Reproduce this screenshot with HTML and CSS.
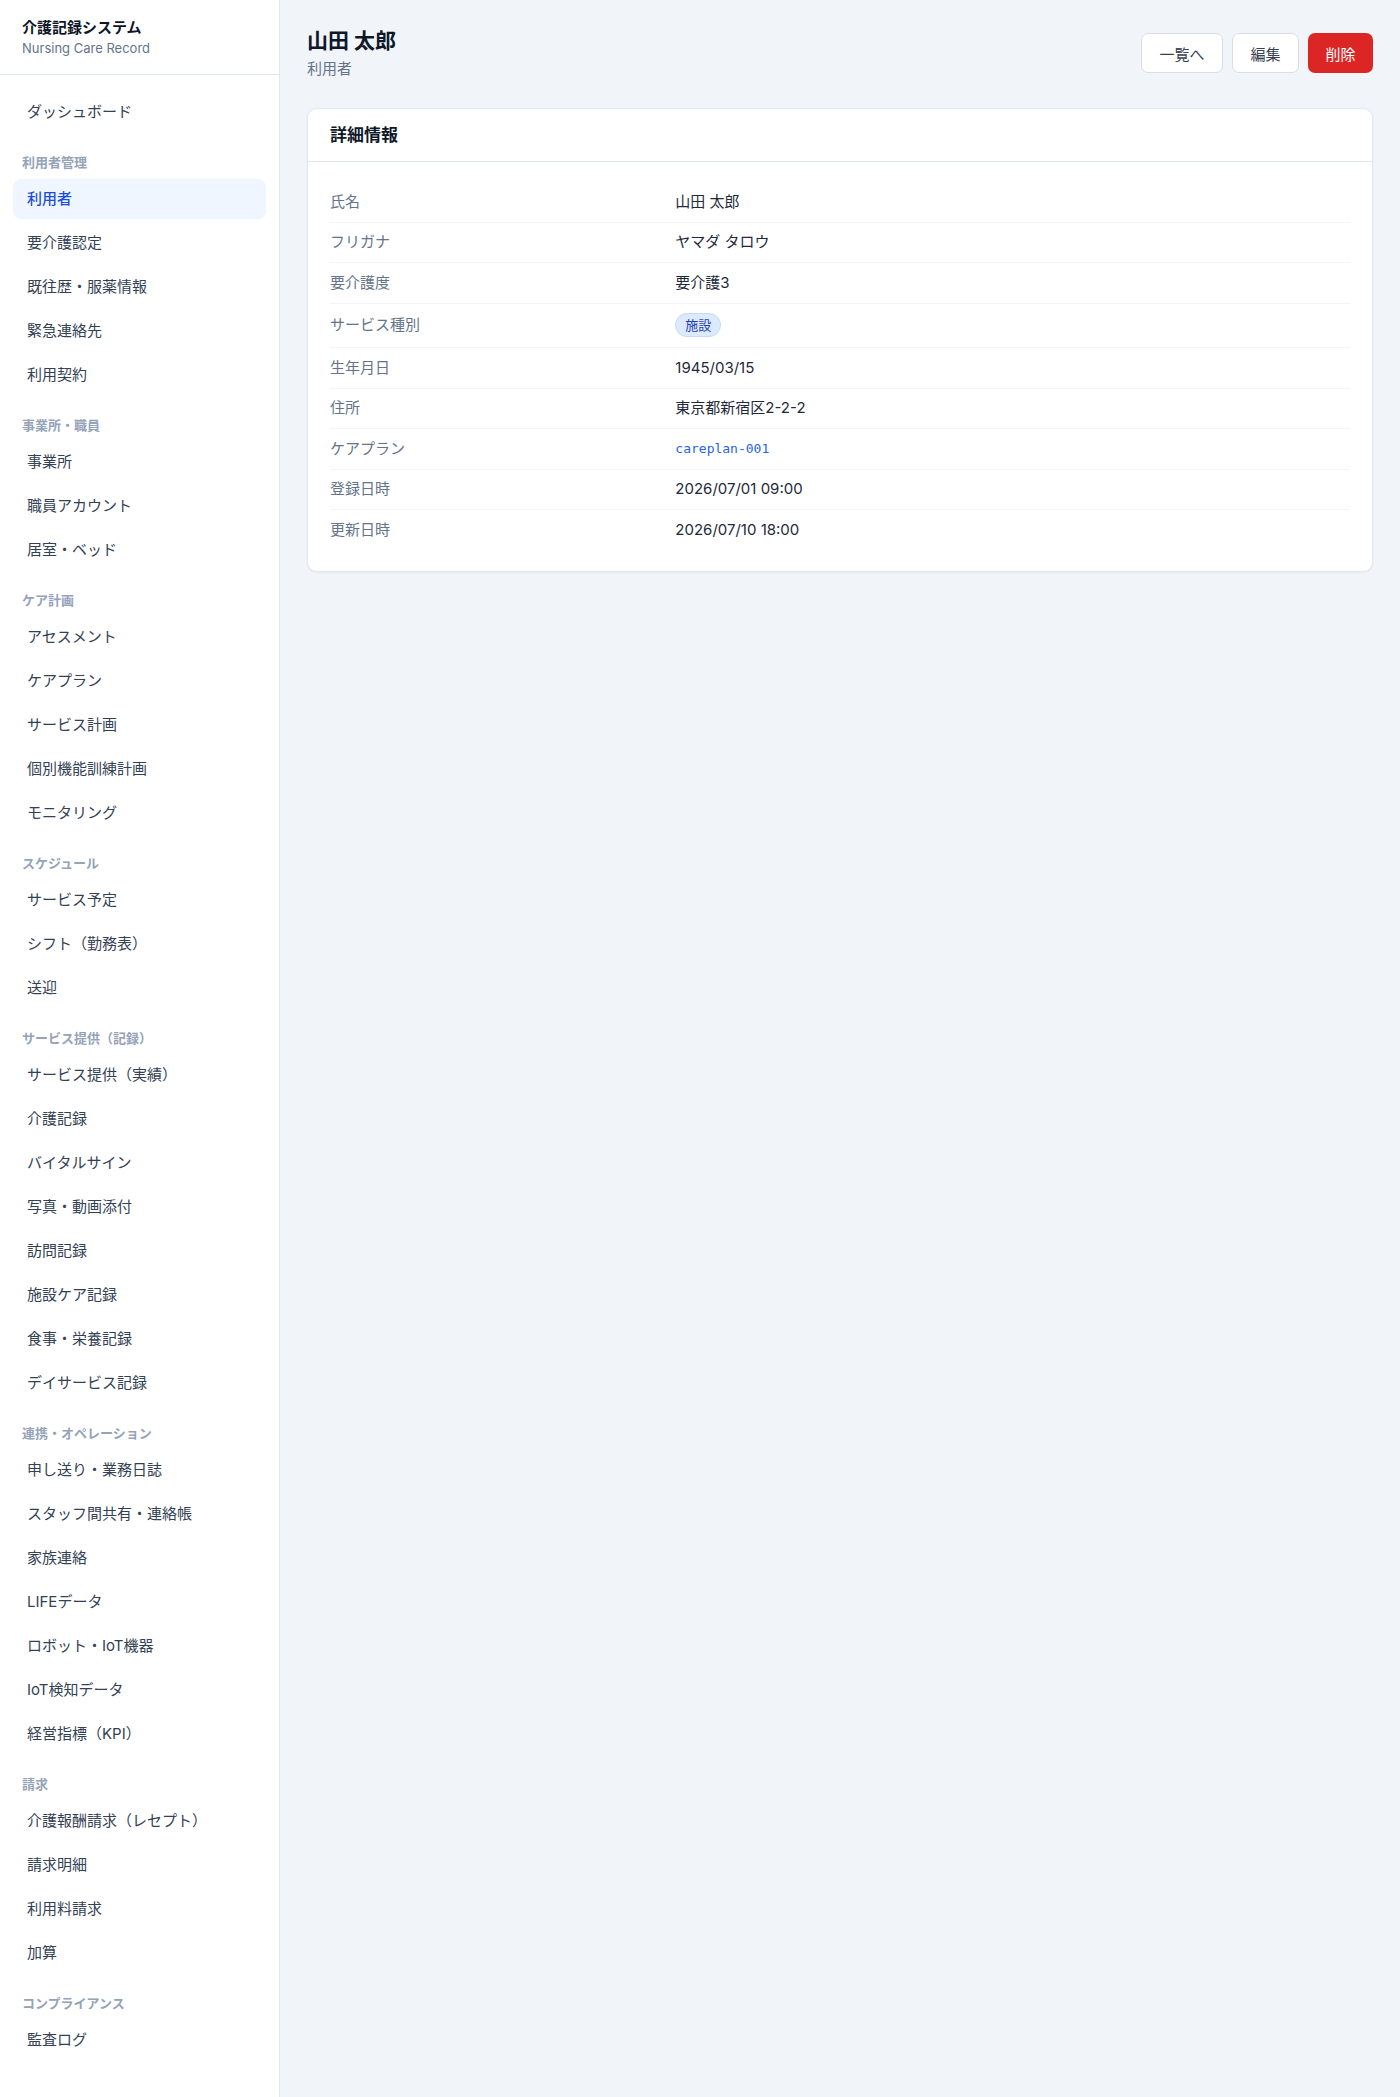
FILE: index.html
```html
<!DOCTYPE html>
<html lang="ja">
<head>
<meta charset="utf-8">
<title>山田 太郎 - 介護記録システム</title>
<link rel="stylesheet" href="styles.css">
</head>
<body>
<div class="layout">
  <aside class="sidebar">
    <div class="brand">
      <div class="brand-title">介護記録システム</div>
      <div class="brand-sub">Nursing Care Record</div>
    </div>
    <nav class="nav">
      <a class="nav-item">ダッシュボード</a>
      <div class="nav-label">利用者管理</div>
      <a class="nav-item active">利用者</a>
      <a class="nav-item">要介護認定</a>
      <a class="nav-item">既往歴・服薬情報</a>
      <a class="nav-item">緊急連絡先</a>
      <a class="nav-item">利用契約</a>
      <div class="nav-label">事業所・職員</div>
      <a class="nav-item">事業所</a>
      <a class="nav-item">職員アカウント</a>
      <a class="nav-item">居室・ベッド</a>
      <div class="nav-label">ケア計画</div>
      <a class="nav-item">アセスメント</a>
      <a class="nav-item">ケアプラン</a>
      <a class="nav-item">サービス計画</a>
      <a class="nav-item">個別機能訓練計画</a>
      <a class="nav-item">モニタリング</a>
      <div class="nav-label">スケジュール</div>
      <a class="nav-item">サービス予定</a>
      <a class="nav-item">シフト（勤務表）</a>
      <a class="nav-item">送迎</a>
      <div class="nav-label">サービス提供（記録）</div>
      <a class="nav-item">サービス提供（実績）</a>
      <a class="nav-item">介護記録</a>
      <a class="nav-item">バイタルサイン</a>
      <a class="nav-item">写真・動画添付</a>
      <a class="nav-item">訪問記録</a>
      <a class="nav-item">施設ケア記録</a>
      <a class="nav-item">食事・栄養記録</a>
      <a class="nav-item">デイサービス記録</a>
      <div class="nav-label">連携・オペレーション</div>
      <a class="nav-item">申し送り・業務日誌</a>
      <a class="nav-item">スタッフ間共有・連絡帳</a>
      <a class="nav-item">家族連絡</a>
      <a class="nav-item">LIFEデータ</a>
      <a class="nav-item">ロボット・IoT機器</a>
      <a class="nav-item">IoT検知データ</a>
      <a class="nav-item">経営指標（KPI）</a>
      <div class="nav-label">請求</div>
      <a class="nav-item">介護報酬請求（レセプト）</a>
      <a class="nav-item">請求明細</a>
      <a class="nav-item">利用料請求</a>
      <a class="nav-item">加算</a>
      <div class="nav-label">コンプライアンス</div>
      <a class="nav-item">監査ログ</a>
    </nav>
  </aside>
  <main class="main">
    <header class="page-head">
      <div class="page-titles">
        <h1 class="page-title">山田 太郎</h1>
        <div class="page-sub">利用者</div>
      </div>
      <div class="actions">
        <button class="btn btn-outline">一覧へ</button>
        <button class="btn btn-outline">編集</button>
        <button class="btn btn-danger">削除</button>
      </div>
    </header>
    <section class="card">
      <div class="card-head">詳細情報</div>
      <div class="card-body">
        <div class="row"><div class="dt">氏名</div><div class="dd">山田 太郎</div></div>
        <div class="row"><div class="dt">フリガナ</div><div class="dd">ヤマダ タロウ</div></div>
        <div class="row"><div class="dt">要介護度</div><div class="dd">要介護3</div></div>
        <div class="row"><div class="dt">サービス種別</div><div class="dd"><span class="badge">施設</span></div></div>
        <div class="row"><div class="dt">生年月日</div><div class="dd">1945/03/15</div></div>
        <div class="row"><div class="dt">住所</div><div class="dd">東京都新宿区2-2-2</div></div>
        <div class="row"><div class="dt">ケアプラン</div><div class="dd"><a class="code-link">careplan-001</a></div></div>
        <div class="row"><div class="dt">登録日時</div><div class="dd">2026/07/01 09:00</div></div>
        <div class="row last"><div class="dt">更新日時</div><div class="dd">2026/07/10 18:00</div></div>
      </div>
    </section>
  </main>
</div>
</body>
</html>
```
FILE: styles.css
```css
* { box-sizing: border-box; }
html, body { margin: 0; padding: 0; }
body {
  font-family: Inter, "Noto Sans CJK JP", sans-serif;
  color: #1e293b;
  background: #f1f5f9;
}
.layout {
  display: flex;
  min-height: 100vh;
}
.sidebar {
  width: 280px;
  flex-shrink: 0;
  background: #ffffff;
  border-right: 1px solid #e2e8f0;
}
.brand {
  padding: 17px 22px;
  border-bottom: 1px solid #e2e8f0;
}
.brand-title {
  font-size: 15px;
  line-height: 22px;
  font-weight: 700;
  color: #0f172a;
}
.brand-sub {
  font-size: 13px;
  line-height: 18px;
  color: #64748b;
}
.nav {
  display: flex;
  flex-direction: column;
  padding: 17px 13px 16px;
}
.nav-item {
  display: block;
  height: 40px;
  line-height: 40px;
  padding: 0 14px;
  margin-bottom: 4px;
  font-size: 15px;
  color: #334155;
  border-radius: 8px;
  text-decoration: none;
  white-space: nowrap;
}
.nav-item.active {
  background: #eff6ff;
  color: #1d4ed8;
  font-weight: 500;
}
.nav-label {
  margin: 17.5px 0 9.5px;
  padding: 0 9px;
  font-size: 13px;
  line-height: 16px;
  font-weight: 600;
  color: #94a3b8;
}
.main {
  flex: 1;
  padding: 27px 27px;
}
.page-head {
  display: flex;
  justify-content: space-between;
  align-items: center;
}
.page-title {
  margin: 0;
  font-size: 21px;
  line-height: 28px;
  font-weight: 700;
  color: #0f172a;
}
.page-sub {
  margin-top: 4px;
  font-size: 15px;
  line-height: 20px;
  color: #64748b;
}
.actions {
  display: flex;
  gap: 9px;
}
.btn {
  height: 40px;
  padding: 0 17.5px;
  font-family: inherit;
  font-size: 15px;
  border-radius: 7px;
  cursor: pointer;
}
.btn-outline {
  background: #ffffff;
  border: 1px solid #d7dde5;
  color: #374151;
}
.btn-danger {
  background: #dc2626;
  border: none;
  color: #ffffff;
}
.card {
  margin-top: 29px;
  background: #ffffff;
  border: 1px solid #e2e8f0;
  border-radius: 10px;
  box-shadow: 0 1px 2px rgba(15, 23, 42, 0.05);
}
.card-head {
  padding: 14px 22px;
  font-size: 17px;
  line-height: 24px;
  font-weight: 700;
  color: #0f172a;
  border-bottom: 1px solid #e2e8f0;
}
.card-body {
  padding: 20px 22px 21px;
}
.row {
  display: grid;
  grid-template-columns: repeat(3, 1fr);
  column-gap: 16px;
  align-items: center;
  padding: 9.75px 0;
  border-bottom: 1px solid #f1f5f9;
  font-size: 15px;
  line-height: 20px;
}
.row.last { border-bottom: none; }
.dt { color: #64748b; }
.dd {
  grid-column: span 2;
  color: #1e293b;
  display: flex;
  align-items: center;
}
.badge {
  display: inline-block;
  padding: 3px 9px;
  font-size: 13px;
  line-height: 16px;
  color: #1e40af;
  background: #dbeafe;
  border: 1px solid #bfdbfe;
  border-radius: 999px;
}
.code-link {
  font-family: "DejaVu Sans Mono", "Liberation Mono", monospace;
  font-size: 13px;
  color: #2563eb;
  text-decoration: none;
}
```
